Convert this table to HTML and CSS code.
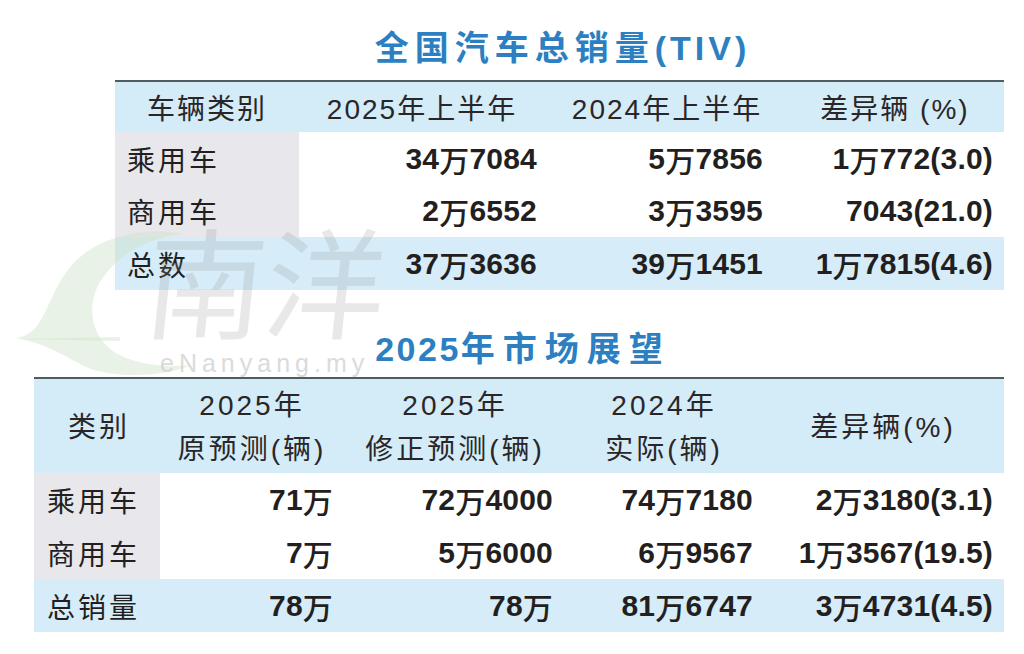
FILE: index.html
```html
<!DOCTYPE html>
<html lang="zh">
<head>
<meta charset="utf-8">
<title>全国汽车总销量(TIV)</title>
<link rel="stylesheet" href="styles.css">
</head>
<body>
<div class="page">
  <section class="block b1">
    <h1 class="title">全国汽车总销量<span class="tiv">(TIV)</span></h1>
    <div class="tbl tbl1">
      <div class="row head">
        <div class="c">车辆类别</div>
        <div class="c">2025年上半年</div>
        <div class="c h3">2024年上半年</div>
        <div class="c h4">差异辆 (%)</div>
      </div>
      <div class="row r1">
        <div class="c lab">乘用车</div>
        <div class="c num">34<span class="w">万</span>7084</div>
        <div class="c num">5<span class="w">万</span>7856</div>
        <div class="c num">1<span class="w">万</span>772(3.0)</div>
      </div>
      <div class="row r2">
        <div class="c lab">商用车</div>
        <div class="c num">2<span class="w">万</span>6552</div>
        <div class="c num">3<span class="w">万</span>3595</div>
        <div class="c num">7043(21.0)</div>
      </div>
      <div class="row total">
        <div class="c lab">总数</div>
        <div class="c num">37<span class="w">万</span>3636</div>
        <div class="c num">39<span class="w">万</span>1451</div>
        <div class="c num">1<span class="w">万</span>7815(4.6)</div>
      </div>
    </div>
  </section>

  <section class="block b2">
    <h2 class="title title2"><span class="yr">2025</span>年市场展望</h2>
    <div class="tbl tbl2">
      <div class="row head">
        <div class="c">类别</div>
        <div class="c two">2025年<br>原预测(辆)</div>
        <div class="c two">2025年<br>修正预测(辆)</div>
        <div class="c two">2024年<br>实际(辆)</div>
        <div class="c">差异辆(%)</div>
      </div>
      <div class="row r1">
        <div class="c lab">乘用车</div>
        <div class="c num">71<span class="w">万</span></div>
        <div class="c num">72<span class="w">万</span>4000</div>
        <div class="c num">74<span class="w">万</span>7180</div>
        <div class="c num">2<span class="w">万</span>3180(3.1)</div>
      </div>
      <div class="row r2">
        <div class="c lab">商用车</div>
        <div class="c num">7<span class="w">万</span></div>
        <div class="c num">5<span class="w">万</span>6000</div>
        <div class="c num">6<span class="w">万</span>9567</div>
        <div class="c num">1<span class="w">万</span>3567(19.5)</div>
      </div>
      <div class="row total">
        <div class="c lab">总销量</div>
        <div class="c num">78<span class="w">万</span></div>
        <div class="c num">78<span class="w">万</span></div>
        <div class="c num">81<span class="w">万</span>6747</div>
        <div class="c num">3<span class="w">万</span>4731(4.5)</div>
      </div>
    </div>
  </section>

  <svg class="watermark" width="1024" height="654" viewBox="0 0 1024 654" aria-hidden="true">
    <path class="wm-e" d="M16,338 C55,334 42,272 100,244 C125,232 160,228 182,234 C150,238 122,252 104,276 C86,300 88,334 114,352 C134,364 162,368 192,365 C160,378 110,378 86,367 C66,357 46,343 16,338 Z"/>
    <path class="wm-tail" d="M14,339 L120,337 L120,341 Z"/>
    <text class="wm-cn" x="150" y="330" transform="skewX(-6) translate(26 0)">南洋</text>
    <text class="wm-url" x="160" y="372">eNanyang.my</text>
  </svg>
</div>
</body>
</html>
```

FILE: styles.css
```css
* {
  box-sizing: border-box;
  margin: 0;
  padding: 0;
}

body {
  margin: 0;
  background: #ffffff;
  font-family: "Liberation Sans", "Noto Sans CJK SC", sans-serif;
  color: #231f20;
}

.page {
  position: relative;
  width: 1024px;
  height: 654px;
  overflow: hidden;
  background: #ffffff;
}

.b1 {
  margin-left: 115px;
  width: 889px;
  padding-top: 20px;
}

.b2 {
  margin-left: 34px;
  width: 970px;
  margin-top: 31px;
}

.title {
  font-weight: 700;
  font-size: 34px;
  line-height: 56px;
  text-align: center;
  color: #2c7fc1;
  letter-spacing: 6px;
  padding-left: 6px;
}

.title .tiv {
  letter-spacing: 4px;
}

.b1 .title {
  margin-bottom: 4px;
}

.title2 {
  letter-spacing: 8px;
  padding-left: 8px;
}

.title2 .yr {
  letter-spacing: 2.5px;
}

.tbl {
  border-top: 2px solid #4f5d63;
}

.row {
  display: grid;
  height: 53px;
}

.tbl1 .row {
  grid-template-columns: 184px 246px 226px 233px;
}

.tbl2 .row {
  grid-template-columns: 126px 184px 222px 196px 242px;
}

.tbl1 .head {
  height: 50px;
}

.tbl1 .r2 {
  height: 52px;
}

.tbl2 .head {
  height: 94px;
}

.c {
  display: flex;
  align-items: center;
  background: #ffffff;
}

.head .c {
  justify-content: center;
  background: #d4ebf8;
  font-size: 28px;
  font-weight: 400;
  letter-spacing: 2px;
  color: #2a2627;
}

.tbl1 .head .h3 {
  padding-left: 18px;
}

.tbl1 .head .h4 {
  padding-left: 15px;
}

.tbl2 .head .c {
  letter-spacing: 3px;
  line-height: 44px;
  padding-top: 4px;
  text-align: center;
}

.tbl2 .head .c:first-child {
  padding-left: 4px;
}

.lab {
  background: #e8e8ec;
  font-size: 28px;
  letter-spacing: 3px;
  padding-left: 12px;
  color: #231f20;
}

.tbl2 .lab {
  padding-left: 13px;
}

.num {
  justify-content: flex-end;
  font-size: 30px;
  font-weight: 700;
  letter-spacing: 0.2px;
  color: #231f20;
}

.num .w {
  font-weight: 500;
}

.tbl1 .num:nth-child(2) { padding-right: 8px; }
.tbl1 .num:nth-child(3) { padding-right: 8px; }
.tbl1 .num:nth-child(4) { padding-right: 11px; }

.tbl2 .num:nth-child(2) { padding-right: 11px; }
.tbl2 .num:nth-child(3) { padding-right: 13px; }
.tbl2 .num:nth-child(4) { padding-right: 9px; }
.tbl2 .num:nth-child(5) { padding-right: 11px; }

.total .c,
.total .lab {
  background: #d6ecf8;
}

.watermark {
  position: absolute;
  left: 0;
  top: 0;
  pointer-events: none;
}

.wm-e,
.wm-tail {
  fill: #cfe3c8;
  opacity: 0.45;
}

.wm-cn {
  font-family: "Noto Sans CJK SC", sans-serif;
  font-weight: 400;
  font-size: 120px;
  fill: #8f8f8f;
  opacity: 0.2;
}

.wm-url {
  font-family: "Liberation Sans", sans-serif;
  font-size: 25px;
  letter-spacing: 5px;
  fill: #cfcfcf;
  opacity: 0.75;
}
```
